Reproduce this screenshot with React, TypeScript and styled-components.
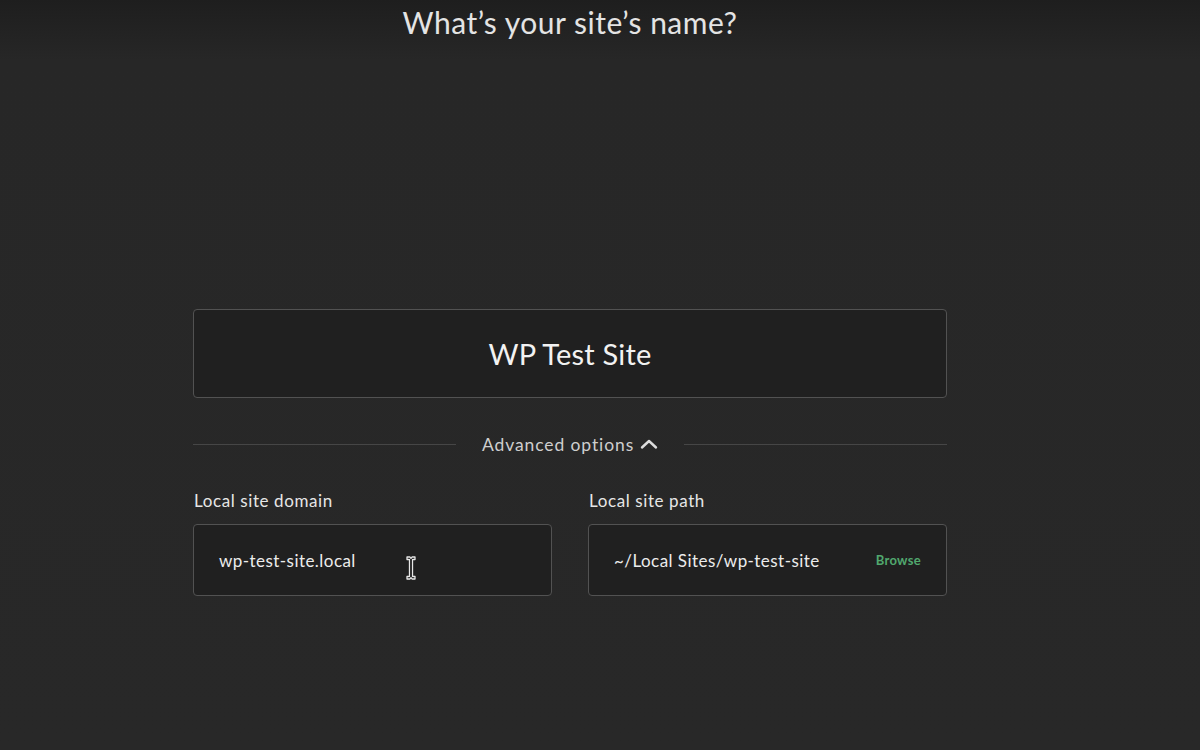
import styled, { createGlobalStyle } from 'styled-components';

const GlobalStyle = createGlobalStyle`
  html, body {
    margin: 0;
    padding: 0;
    height: 100%;
  }
  body {
    background: #282828;
    font-family: Lato, "Open Sans", "Noto Sans", sans-serif;
    color: #ececec;
  }
`;

const App = () => {
  return (
    <>
      <GlobalStyle />
      <Page>
        <Title>What’s your site’s name?</Title>
        <Form>
          <NameBox>
            <NameText>WP Test Site</NameText>
          </NameBox>
          <Divider>
            <Line />
            <Toggle>
              Advanced options
              <svg width="18" height="12" viewBox="0 0 18 12" fill="none">
                <path d="M2 9.5 L9 3 L16 9.5" stroke="#dcdcdc" strokeWidth="2.4" strokeLinecap="round" strokeLinejoin="round" />
              </svg>
            </Toggle>
            <Line />
          </Divider>
          <Fields>
            <Field>
              <Label>Local site domain</Label>
              <SmallBox>
                <FieldText>wp-test-site.local</FieldText>
                <Cursor width="14" height="26" viewBox="0 0 14 26">
                  <path
                    d="M3 2 h3 l1 1.5 l1 -1.5 h3 v2.5 h-2.5 v17 h2.5 v2.5 h-3 l-1 -1.5 l-1 1.5 h-3 v-2.5 h2.5 v-17 h-2.5 z"
                    fill="#111"
                    stroke="#e8e8e8"
                    strokeWidth="1.3"
                    strokeLinejoin="round"
                  />
                </Cursor>
              </SmallBox>
            </Field>
            <Field>
              <Label>Local site path</Label>
              <SmallBox>
                <FieldText>~/Local Sites/wp-test-site</FieldText>
                <Browse>Browse</Browse>
              </SmallBox>
            </Field>
          </Fields>
        </Form>
      </Page>
    </>
  );
};

export default App;

const Page = styled.div`
  min-height: 750px;
  box-sizing: border-box;
  background: linear-gradient(to bottom, #1e1e1e 0px, #272727 60px, #282828 100%);
  padding-left: 193px;
  display: flex;
  flex-direction: column;
`;

const Title = styled.h1`
  width: 754px;
  margin: 0;
  padding-top: 3px;
  text-align: center;
  font-size: 30px;
  font-weight: 400;
  line-height: 38px;
  color: #e4e4e4;
  letter-spacing: 0.5px;
`;

const Form = styled.div`
  width: 754px;
  margin-top: 268px;
  display: flex;
  flex-direction: column;
`;

const NameBox = styled.div`
  height: 89px;
  box-sizing: border-box;
  border: 1px solid #525252;
  border-radius: 4px;
  background: #202020;
  display: flex;
  align-items: center;
  justify-content: center;
`;

const NameText = styled.div`
  font-size: 29px;
  color: #f2f2f2;
  letter-spacing: 0.2px;
`;

const Divider = styled.div`
  margin-top: 34px;
  height: 24px;
  display: flex;
  align-items: center;
  gap: 26px;
`;

const Line = styled.div`
  flex: 1;
  height: 1px;
  background: #464646;
`;

const Toggle = styled.div`
  display: flex;
  align-items: center;
  gap: 6px;
  font-size: 17.5px;
  color: #cfcfcf;
  letter-spacing: 0.9px;
`;

const Fields = styled.div`
  margin-top: 35px;
  display: grid;
  grid-template-columns: 359px 359px;
  column-gap: 36px;
`;

const Field = styled.div`
  display: flex;
  flex-direction: column;
`;

const Label = styled.div`
  font-size: 17px;
  line-height: 20px;
  color: #e6e6e6;
  padding-left: 1px;
  letter-spacing: 0.6px;
`;

const SmallBox = styled.div`
  position: relative;
  margin-top: 13px;
  height: 72px;
  box-sizing: border-box;
  border: 1px solid #525252;
  border-radius: 4px;
  background: #202020;
  display: flex;
  align-items: center;
  justify-content: space-between;
  padding: 0 25px 0 25px;
`;

const FieldText = styled.div`
  font-size: 17px;
  color: #ececec;
  letter-spacing: 0.45px;
`;

const Browse = styled.div`
  font-size: 13px;
  font-weight: 700;
  color: #51a86e;
  letter-spacing: 0.3px;
`;

const Cursor = styled.svg`
  position: absolute;
  left: 210px;
  top: 30px;
`;
